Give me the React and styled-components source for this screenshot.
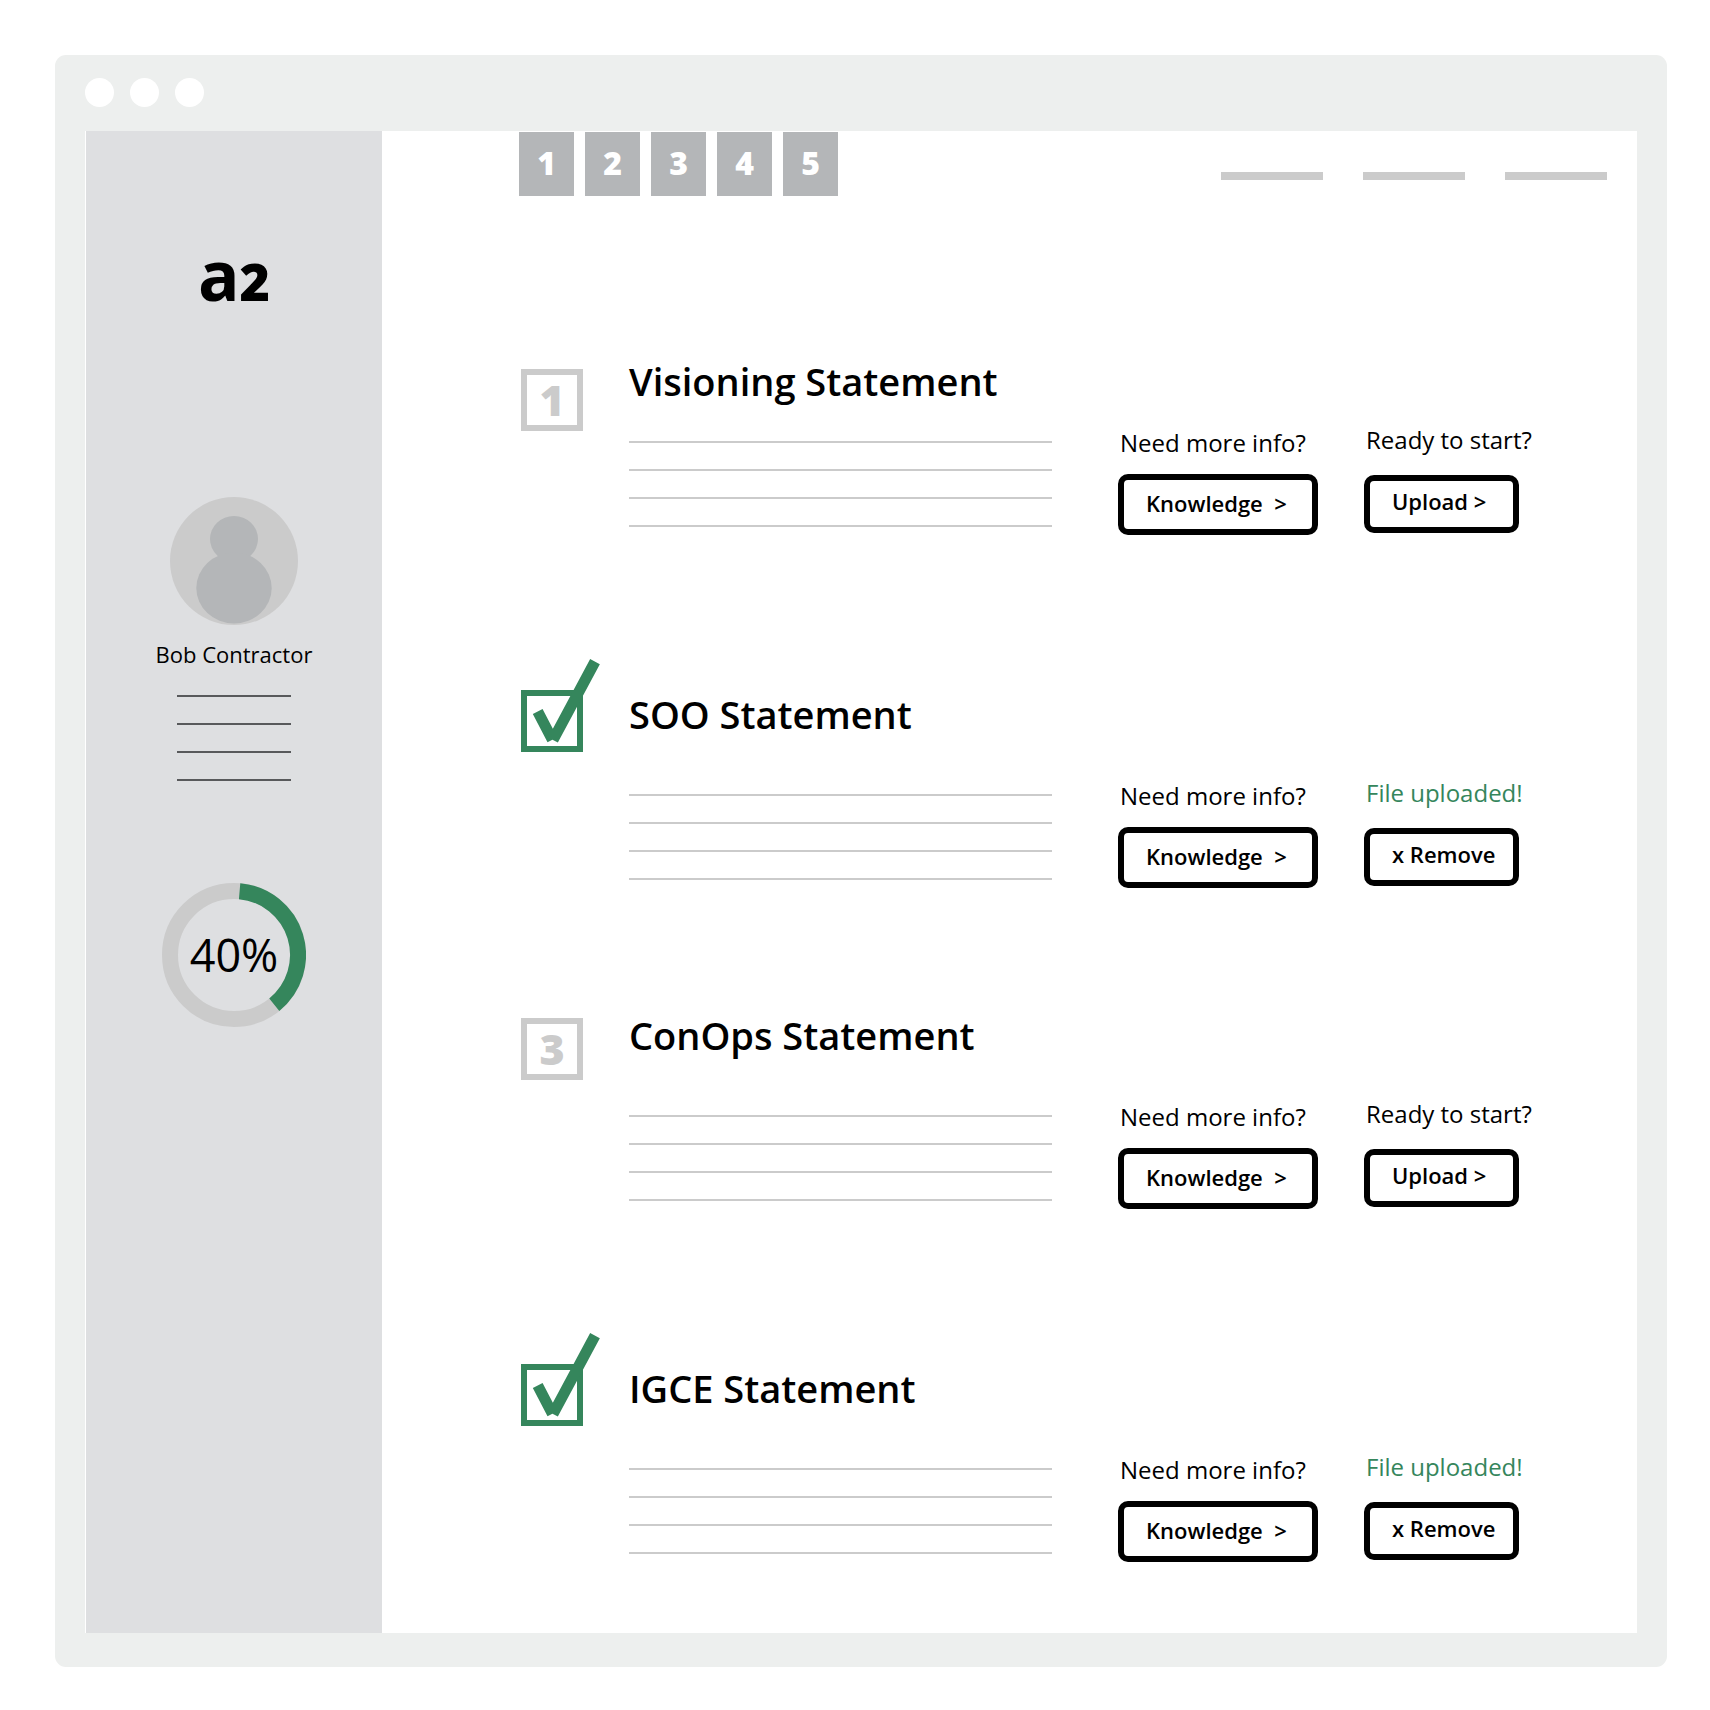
import React from "react";
import styled, { createGlobalStyle, css } from "styled-components";

const color = {
  frame: "#edefee",
  sidebar: "#dedfe1",
  silver: "#cbcbcb",
  grey: "#b4b6b8",
  rule: "#58595b",
  green: "#35865c",
};

const GlobalStyle = createGlobalStyle`
  * { box-sizing: border-box; }
  body {
    margin: 0;
    background: #fff;
    color: #000;
    font-family: "Open Sans", "Noto Sans", sans-serif;
  }
`;

const Page = styled.div`
  display: flex;
  min-height: 100vh;
  padding: 55px 43px 43px 55px;
`;

const Frame = styled.div`
  flex: 1;
  display: flex;
  flex-direction: column;
  padding: 0 30px 34px;
  border-radius: 11px;
  background: ${color.frame};
`;

const TitleBar = styled.div`
  display: flex;
  gap: 16px;
  height: 76px;
  padding-top: 23px;
`;

const Dot = styled.span`
  width: 29px;
  height: 29px;
  border-radius: 50%;
  background: #fff;
`;

const Screen = styled.div`
  flex: 1;
  display: flex;
  padding-left: 1px;
  background: #fff;
`;

const Sidebar = styled.aside`
  flex: none;
  display: flex;
  flex-direction: column;
  align-items: center;
  width: 296px;
  padding-top: 107px;
  background: ${color.sidebar};
`;

const Logo = styled.div`
  height: 72px;
  font-size: 69px;
  font-weight: 700;
  line-height: 72px;
`;

const LogoDigit = styled.span`
  font-size: 52px;
  font-weight: 800;
`;

const Profile = styled.div`
  display: flex;
  flex-direction: column;
  align-items: center;
  margin: 187px 0 102px;
`;

const UserName = styled.div`
  margin: 14px 0 26px;
  font-size: 22px;
  line-height: 30px;
`;

const Rules = styled.div`
  display: flex;
  flex-direction: column;
  gap: 26px;
`;

const ProfileRules = styled(Rules)`
  width: 114px;
`;

const BodyRules = styled(Rules)`
  flex: 1;
  padding-top: 17px;
`;

const Rule = styled.span`
  height: 2px;
  background: ${(p) => (p.$dark ? color.rule : color.silver)};
`;

const Progress = styled.div`
  display: grid;
  place-items: center;

  > * {
    grid-area: 1 / 1;
  }
`;

const ProgressValue = styled.span`
  font-size: 45px;
  line-height: 64px;
`;

const Main = styled.main`
  flex: 1;
  min-width: 0;
  padding-top: 1px;
`;

const Header = styled.header`
  display: flex;
  justify-content: space-between;
  padding: 0 30px 0 137px;
`;

const Steps = styled.nav`
  display: flex;
  gap: 11px;
`;

const Step = styled.a`
  display: flex;
  align-items: center;
  justify-content: center;
  width: 55px;
  height: 64px;
  padding-bottom: 4px;
  background: ${color.grey};
  color: #fff;
  font-size: 32px;
  font-weight: 800;
  text-decoration: none;
`;

const Menu = styled.nav`
  display: flex;
  gap: 40px;
  padding-top: 40px;
`;

const MenuLink = styled.a`
  width: 102px;
  height: 8px;
  background: ${color.silver};
`;

const Sections = styled.div`
  display: flex;
  flex-direction: column;
  gap: 121px;
  padding: 159px 118px 70px 139px;
`;

const Section = styled.section`
  display: grid;
  grid-template-columns: 108px 1fr;
  padding-top: ${(p) => (p.$done ? 3 : 0)}px;
`;

const Content = styled.div`
  display: flex;
  flex-direction: column;
  gap: ${(p) => (p.$lead ? 17 : 37)}px;
  padding-top: ${(p) => (p.$done ? 29 : 0)}px;
`;

const Badge = styled.div`
  display: flex;
  align-items: center;
  justify-content: center;
  width: 62px;
  height: 62px;
  margin-top: ${(p) => (p.$lead ? 14 : 9)}px;
  border: 6px solid ${color.silver};
  color: ${color.silver};
  font-size: 43px;
  font-weight: 800;
  line-height: 50px;
`;

const Title = styled.h2`
  margin: 0;
  font-size: 38px;
  font-weight: 600;
  line-height: 52px;
`;

const Body = styled.div`
  display: flex;
  align-items: flex-start;
`;

const Action = styled.div`
  display: flex;
  flex-direction: column;
  ${(p) =>
    p.$secondary
      ? css`
          gap: 19px;
          width: 155px;
          margin-left: 46px;
        `
      : css`
          gap: 15px;
          width: 200px;
          margin-left: 66px;
          padding-top: 3px;
        `}
`;

const Caption = styled.span`
  padding-left: 2px;
  color: ${(p) => (p.$done ? color.green : "#000")};
  font-size: 24px;
  line-height: 32px;
  white-space: nowrap;
`;

const Button = styled.button`
  height: ${(p) => (p.$secondary ? 58 : 61)}px;
  padding: 0 0 ${(p) => (p.$secondary ? 6 : 3)}px 22px;
  border: 6px solid #000;
  border-radius: 10px;
  background: #fff;
  color: #000;
  font-family: inherit;
  font-size: 22px;
  font-weight: 600;
  line-height: 30px;
  text-align: left;
  white-space: pre;
  cursor: pointer;
`;

const CheckIcon = styled.svg`
  display: block;
`;

function Check() {
  return (
    <CheckIcon width="80" height="93" viewBox="0 0 80 93" fill="none" stroke={color.green} role="img" aria-label="Done">
      <rect x="3" y="34" width="56" height="56" strokeWidth="6" />
      <path d="M16.7 52.5 31.4 80.7M74 2.6 32 81" strokeWidth="11" />
    </CheckIcon>
  );
}

function Avatar() {
  return (
    <svg width="128" height="128" viewBox="0 0 128 128" aria-hidden="true">
      <circle cx="64" cy="64" r="64" fill={color.silver} />
      <ellipse cx="64" cy="42" rx="24" ry="23" fill={color.grey} />
      <ellipse cx="64" cy="91" rx="37.7" ry="35.5" fill={color.grey} />
    </svg>
  );
}

function Ring() {
  return (
    <svg width="144" height="144" viewBox="0 0 144 144" fill="none" strokeWidth="16" aria-hidden="true">
      <circle cx="72" cy="72" r="64" stroke={color.silver} />
      <path d="M77.6 8.2A64 64 0 0 1 112.3 121.7" stroke={color.green} />
    </svg>
  );
}

const ruleRows = [0, 1, 2, 3];

const sections = [
  { number: 1, title: "Visioning Statement", lead: true },
  { number: 2, title: "SOO Statement", done: true },
  { number: 3, title: "ConOps Statement" },
  { number: 4, title: "IGCE Statement", done: true },
];

function StatementSection({ number, title, lead, done }) {
  return (
    <Section id={`section-${number}`} $done={done}>
      {done ? <Check /> : <Badge $lead={lead}>{number}</Badge>}
      <Content $lead={lead} $done={done}>
        <Title>{title}</Title>
        <Body>
          <BodyRules>
            {ruleRows.map((r) => (
              <Rule key={r} />
            ))}
          </BodyRules>
          <Action>
            <Caption>Need more info?</Caption>
            <Button type="button">{"Knowledge  >"}</Button>
          </Action>
          <Action $secondary>
            <Caption $done={done}>{done ? "File uploaded!" : "Ready to start?"}</Caption>
            <Button type="button" $secondary>
              {done ? "x Remove" : "Upload >"}
            </Button>
          </Action>
        </Body>
      </Content>
    </Section>
  );
}

export default function App() {
  return (
    <>
      <GlobalStyle />
      <Page>
        <Frame>
          <TitleBar>
            <Dot />
            <Dot />
            <Dot />
          </TitleBar>
          <Screen>
            <Sidebar>
              <Logo>
                a<LogoDigit>2</LogoDigit>
              </Logo>
              <Profile>
                <Avatar />
                <UserName>Bob Contractor</UserName>
                <ProfileRules>
                  {ruleRows.map((r) => (
                    <Rule key={r} $dark />
                  ))}
                </ProfileRules>
              </Profile>
              <Progress>
                <Ring />
                <ProgressValue>40%</ProgressValue>
              </Progress>
            </Sidebar>
            <Main>
              <Header>
                <Steps aria-label="Steps">
                  {[1, 2, 3, 4, 5].map((n) => (
                    <Step key={n} href={`#section-${n}`}>
                      {n}
                    </Step>
                  ))}
                </Steps>
                <Menu aria-label="Menu">
                  <MenuLink href="#first" aria-label="First" />
                  <MenuLink href="#second" aria-label="Second" />
                  <MenuLink href="#third" aria-label="Third" />
                </Menu>
              </Header>
              <Sections>
                {sections.map((s) => (
                  <StatementSection key={s.number} {...s} />
                ))}
              </Sections>
            </Main>
          </Screen>
        </Frame>
      </Page>
    </>
  );
}
